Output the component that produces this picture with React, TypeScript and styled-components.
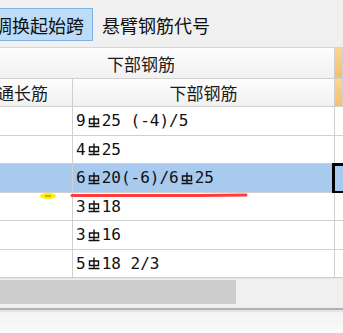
import React from "react";
import styled, { createGlobalStyle } from "styled-components";

const GlobalStyle = createGlobalStyle`
  html, body { margin: 0; padding: 0; background: #f6f6f6; }
  body { font-family: "Noto Sans CJK SC", "Noto Sans", sans-serif; overflow: hidden; }
`;

const Page = styled.div`
  width: 343px;
  height: 333px;
  position: relative;
  overflow: hidden;
  display: flex;
  flex-direction: column;
`;

const Toolbar = styled.div`
  height: 48px;
  box-sizing: border-box;
  background: #f0f0f0;
  border-bottom: 1px solid #d6d6d6;
  display: flex;
  align-items: center;
  gap: 8px;
  padding-top: 2px;
`;

const ToolButton = styled.div<{ $active?: boolean }>`
  height: 33px;
  box-sizing: border-box;
  display: flex;
  align-items: center;
  padding: 0 8px 0 0;
  font-size: 18px;
  color: #111;
  white-space: nowrap;
  background: ${(p) => (p.$active ? "#bcdcf7" : "transparent")};
  border: 1px solid ${(p) => (p.$active ? "#7fb3e3" : "transparent")};
  margin-left: ${(p) => (p.$active ? "-7px" : "0")};
`;

const Grid = styled.div`
  display: grid;
  grid-template-columns: 73px 262px 1fr;
  grid-template-rows: 31px 28px repeat(6, 28.5px);
  background: #fff;
`;

const HeadCell = styled.div<{ $span?: number; $orange?: boolean; $pad?: number; $align?: string; $padR?: number }>`
  grid-column: span ${(p) => p.$span || 1};
  box-sizing: border-box;
  border-right: 1px solid #d0d0d0;
  border-bottom: 1px solid #d0d0d0;
  background: ${(p) =>
    p.$orange
      ? "linear-gradient(#fbd694, #f3c06a)"
      : "linear-gradient(#fdfdfd, #f1f1f1)"};
  font-size: 17px;
  color: #1a1a1a;
  display: flex;
  align-items: center;
  justify-content: ${(p) => p.$align || "flex-start"};
  padding-left: ${(p) => p.$pad || 0}px;
  padding-right: ${(p) => p.$padR || 0}px;
  white-space: nowrap;
  overflow: hidden;
`;

const Cell = styled.div<{ $sel?: boolean; $last?: boolean }>`
  box-sizing: border-box;
  border-right: ${(p) => (p.$last ? "none" : "1px solid #d0d0d0")};
  border-bottom: 1px solid #d0d0d0;
  background: ${(p) => (p.$sel ? "#a7caee" : "#fff")};
  font-family: "DejaVu Sans Mono", monospace;
  font-size: 16px;
  color: #111;
  display: flex;
  align-items: center;
  padding-left: 3px;
  white-space: nowrap;
  position: relative;
`;

const CurrentMark = styled.div`
  position: absolute;
  left: -3px;
  top: -1px;
  bottom: -2px;
  right: -4px;
  border: 3px solid #000;
  background: #a7caee;
`;

const Rebar = styled.svg`
  width: 12px;
  height: 14px;
  margin: 0 2px 0 2px;
  flex: none;
`;

const ScrollBar = styled.div`
  height: 30px;
  box-sizing: border-box;
  background: #f0f0f0;
  border-top: 1px solid #e6e6e6;
  padding-top: 1px;
  padding-bottom: 4px;
  display: flex;
`;

const Thumb = styled.div`
  width: 236px;
  background: #cdcdcd;
`;

const Footer = styled.div`
  flex: 1;
  border-top: 2px solid #b0b0bb;
  box-shadow: inset 0 2px 0 #e4e4e4;
  background: linear-gradient(#f3f3f3, #fafafa);
`;

const Annot = styled.svg`
  position: absolute;
  left: 0;
  top: 0;
  pointer-events: none;
`;

const Sym = () => (
  <Rebar viewBox="0 0 12 14">
    <path
      d="M1.5 5h9v4.5h-9z M6 1.5v11 M0.5 12.5h11"
      stroke="#111"
      strokeWidth="1.4"
      fill="none"
    />
  </Rebar>
);

const R = ({ t }: { t: string }) => {
  const parts = t.split("#");
  return (
    <>
      {parts.map((p, i) => (
        <React.Fragment key={i}>
          {i > 0 && <Sym />}
          <span>{p}</span>
        </React.Fragment>
      ))}
    </>
  );
};

const rows = ["9#25 (-4)/5", "4#25", "6#20(-6)/6#25", "3#18", "3#16", "5#18 2/3"];

export default function App() {
  return (
    <Page>
      <GlobalStyle />
      <Toolbar>
        <ToolButton $active>调换起始跨</ToolButton>
        <ToolButton>悬臂钢筋代号</ToolButton>
      </Toolbar>
      <Grid>
        <HeadCell $span={2} $pad={107}>下部钢筋</HeadCell>
        <HeadCell $orange />
        <HeadCell $align="flex-end" $padR={24}>通长筋</HeadCell>
        <HeadCell $align="center">下部钢筋</HeadCell>
        <HeadCell $orange />
        {rows.map((r, i) => (
          <React.Fragment key={i}>
            <Cell $sel={i === 2} />
            <Cell $sel={i === 2}>
              <R t={r} />
            </Cell>
            <Cell $last>{i === 2 && <CurrentMark />}</Cell>
          </React.Fragment>
        ))}
      </Grid>
      <ScrollBar>
        <Thumb />
      </ScrollBar>
      <Footer />
      <Annot width="343" height="333" viewBox="0 0 343 333">
        <ellipse cx="48" cy="196" rx="8" ry="3" fill="#ffee00" />
        <path d="M45 196h6" stroke="#8a7a00" strokeWidth="1" />
        <path d="M72 195.5 L200 195.5 L246 195" stroke="#ff3b3b" strokeWidth="3" strokeLinecap="round" />
      </Annot>
    </Page>
  );
}
